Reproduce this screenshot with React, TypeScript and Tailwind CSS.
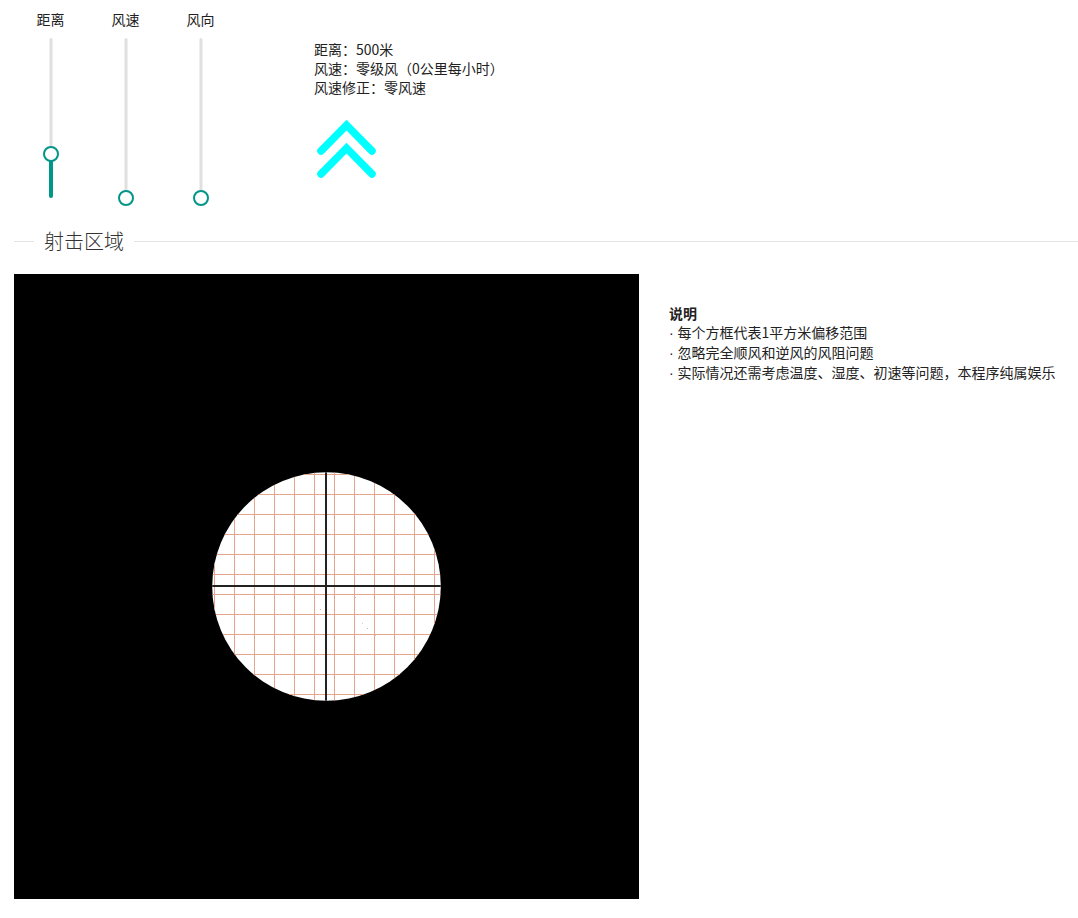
import React from "react";

const font = { fontFamily: '"Noto Sans CJK SC", "Noto Sans", sans-serif' };

const sliders = [
  { label: "距离", value: 27.5 },
  { label: "风速", value: 0 },
  { label: "风向", value: 0 },
];

const notes = [
  "每个方框代表1平方米偏移范围",
  "忽略完全顺风和逆风的风阻问题",
  "实际情况还需考虑温度、湿度、初速等问题，本程序纯属娱乐",
];

function VSlider({ label, value }: { label: string; value: number }) {
  return (
    <div className="flex w-[75px] flex-col items-center">
      <span className="text-[14px] leading-[19px] text-[#222]">{label}</span>
      <div className="relative mt-[9px] h-[160px] w-[16px]">
        <div className="absolute left-1/2 top-0 h-full w-[3px] -translate-x-1/2 rounded-full bg-[#e0e0e0]" />
        <div
          className="absolute bottom-0 left-1/2 w-[4px] -translate-x-1/2 rounded-full bg-[#009688]"
          style={{ height: `${value}%` }}
        />
        <div
          className="absolute left-0 h-[16px] w-[16px] translate-y-1/2 rounded-full border-2 border-[#009688] bg-white"
          style={{ bottom: `${value}%` }}
        />
      </div>
    </div>
  );
}

function Target() {
  const grid: number[] = [];
  for (let p = 0; p < 625; p += 20) grid.push(p);
  return (
    <svg width="625" height="625" viewBox="0 0 625 625" className="block shrink-0">
      <defs>
        <clipPath id="scope">
          <circle cx="312.5" cy="312.5" r="114.3" />
        </clipPath>
      </defs>
      <rect width="625" height="625" fill="#000" />
      <g clipPath="url(#scope)">
        <rect width="625" height="625" fill="#fff" />
        {grid.map((g) => (
          <g key={g}>
            <rect x={g} y="0" width="1" height="625" fill="#e3a68c" />
            <rect x="0" y={g} width="625" height="1" fill="#e3a68c" />
          </g>
        ))}
        <rect x="311" y="0" width="2" height="625" fill="#222" />
        <rect x="0" y="311" width="625" height="2" fill="#222" />
        <rect x="341" y="323" width="1" height="1" fill="#ccc" />
        <rect x="306" y="335" width="1" height="1" fill="#bbb" />
        <rect x="348" y="349" width="1" height="1" fill="#ccc" />
        <rect x="353" y="354" width="1" height="1" fill="#bbb" />
        <rect x="361" y="361" width="1" height="1" fill="#ccc" />
      </g>
    </svg>
  );
}

export default function App() {
  return (
    <div className="min-h-screen bg-white text-[#222]" style={font}>
      <div className="flex pl-[13px] pt-[10px]">
        {sliders.map((s) => (
          <VSlider key={s.label} label={s.label} value={s.value} />
        ))}
        <div className="ml-[76px] pt-[30px]">
          <div className="text-[14px] leading-[19px]">
            <div>距离：500米</div>
            <div>风速：零级风（0公里每小时）</div>
            <div>风速修正：零风速</div>
          </div>
          <svg width="68" height="64" viewBox="0 0 68 64" className="mt-[20px] block">
            <polyline points="7,34 32.5,8 58,34" fill="none" stroke="#00ffff" strokeWidth="7.5" strokeLinecap="round" />
            <polyline points="7,57 32.5,31 58,57" fill="none" stroke="#00ffff" strokeWidth="7.5" strokeLinecap="round" />
          </svg>
        </div>
      </div>

      <div className="mt-[30px] flex items-center pl-[14px]">
        <div className="h-px w-[20px] bg-[#e3e3e3]" />
        <span className="px-[10px] text-[20px] font-light leading-[26px] text-[#333]">射击区域</span>
        <div className="h-px flex-1 bg-[#e3e3e3]" />
      </div>

      <div className="mt-[20px] flex pl-[14px]">
        <Target />
        <div className="pl-[30px] pt-[30px] text-[14px] leading-[19px]">
          <div className="font-bold">说明</div>
          {notes.map((n) => (
            <div key={n}>
              <span className="font-['Liberation_Sans',sans-serif]">· </span>
              {n}
            </div>
          ))}
        </div>
      </div>
    </div>
  );
}
